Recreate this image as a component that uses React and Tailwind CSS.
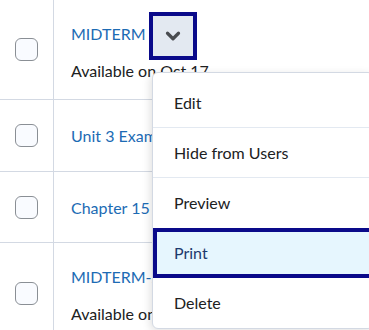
import { ChevronDown } from 'lucide-react'

const rows = [
    { title: 'MIDTERM', sub: 'Available on Oct 17', h: 'h-[100px]' },
    { title: 'Unit 3 Exam', h: 'h-[72px]' },
    { title: 'Chapter 15 Quiz', h: 'h-[71px]' },
    { title: 'MIDTERM-2', sub: 'Available on Oct 24', h: 'h-[100px]' },
]

const menuItems = ['Edit', 'Hide from Users', 'Preview', 'Print', 'Delete']

function Row({ title, sub, h, last }) {
    return (
        <div className={`flex shrink-0 ${h} ${last ? '' : 'border-b border-[#d3d9e3]'}`}>
            <div className="flex w-[54px] shrink-0 items-center justify-center border-r border-[#d3d9e3]">
                <div className="h-[23px] w-[23px] rounded-[6px] border-[1.5px] border-[#8a8f95] bg-[#f9fbff]" />
            </div>
            <div className={`flex flex-col justify-center gap-[17px] pl-[17px] ${sub ? 'pt-[5px]' : 'pt-[1px]'}`}>
                <span className="text-[16px] leading-[20px] text-[#1c6bb4]">{title}</span>
                {sub && <span className="text-[16px] leading-[20px] text-[#202122]">{sub}</span>}
            </div>
        </div>
    )
}

export default function App() {
    return (
        <div className="relative flex h-[330px] w-[369px] flex-col overflow-hidden bg-white font-['Lato',sans-serif]">
            {rows.map((r, i) => (
                <Row key={r.title} {...r} last={i === rows.length - 1} />
            ))}

            {/* dropdown trigger */}
            <button className="absolute left-[149px] top-[12px] flex h-[48px] w-[48px] items-center justify-center border-[4px] border-[#0a0a8a] bg-[#e3e9f1] text-[#494c50]">
                <ChevronDown size={22} strokeWidth={3.5} />
            </button>

            {/* menu */}
            <div className="absolute left-[152px] top-[72px] w-[222px] rounded-[6px] border border-[#d3d9e3] bg-white pt-[5px] shadow-[-2px_2px_8px_rgba(0,0,0,0.12)]">
                {menuItems.map((item, i) => {
                    if (item === 'Print') {
                        return (
                            <div key={item} className="flex h-[50px] items-center border-[4px] border-[#0a0a8a] bg-[#e6f6fe] pl-[17px] text-[16px] text-[#1d3a6c]">
                                {item}
                            </div>
                        )
                    }
                    return (
                        <div
                            key={item}
                            className={`flex h-[50px] items-center pl-[21px] text-[16px] text-[#202122] ${i < menuItems.length - 1 && menuItems[i + 1] !== 'Print' ? 'border-b border-[#e3e9f1]' : ''}`}
                        >
                            {item}
                        </div>
                    )
                })}
            </div>
        </div>
    )
}
